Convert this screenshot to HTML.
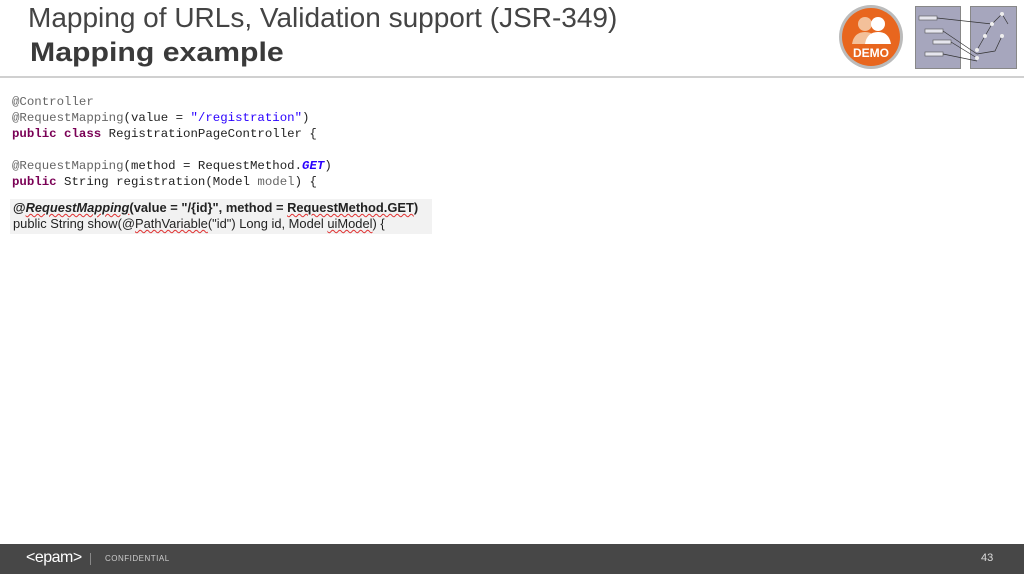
<!DOCTYPE html>
<html><head><style>
body{margin:0;width:1024px;height:574px;position:relative;background:#fff;overflow:hidden;font-family:"Liberation Sans",sans-serif}
.t1{position:absolute;left:28px;top:2px;font-size:28px;color:#444;white-space:nowrap}
.t2{position:absolute;left:30px;top:37px;font-size:27px;font-weight:bold;color:#3a3a3a;white-space:nowrap;transform:scaleX(1.12);transform-origin:left}
.hl{position:absolute;left:0;top:76px;width:1024px;height:2px;background:#d0d0d0}
.code{position:absolute;left:12px;font-family:"Liberation Mono",monospace;font-size:12.4px;color:#222;white-space:pre;line-height:16px}
.k{color:#7a0055;font-weight:bold}.a{color:#666}.s{color:#2a00ff}
.box{position:absolute;left:10px;top:199px;width:422px;height:35px;background:#f2f2f2;font-size:12.9px;color:#222;line-height:16px}
.foot{position:absolute;left:0;top:544px;width:1024px;height:30px;background:#474747;color:#ddd}
u{text-decoration:underline wavy #e03030;text-decoration-thickness:1px}
</style></head><body>
<div class="t1">Mapping of URLs, Validation support (JSR-349)</div>
<div class="t2">Mapping example</div>
<div class="hl"></div>
<svg style="position:absolute;left:838px;top:4px" width="68" height="66"><circle cx="33" cy="33" r="32" fill="#bbb"/><circle cx="33" cy="33" r="29" fill="#e8661e"/><circle cx="27" cy="20" r="7" fill="#f3c09a"/><circle cx="40" cy="20" r="7" fill="#fff"/><path d="M14 40q2-12 13-12q11 0 13 12z" fill="#f3c09a"/><path d="M27 40q2-12 13-12q11 0 13 12z" fill="#fff"/><text x="33" y="53" font-size="12" font-weight="bold" fill="#fff" text-anchor="middle" font-family="Liberation Sans">DEMO</text></svg>
<div style="position:absolute;left:915px;top:6px;width:44px;height:61px;background:#a6a6bd;border:1px solid #888"></div>
<div style="position:absolute;left:970px;top:6px;width:45px;height:61px;background:#a6a6bd;border:1px solid #888"></div>
<svg style="position:absolute;left:915px;top:6px" width="102" height="62"><g fill="#e6e6ee" stroke="#555" stroke-width=".6"><rect x="4" y="10" width="18" height="4"/><rect x="10" y="23" width="18" height="4"/><rect x="18" y="34" width="18" height="4"/><rect x="10" y="46" width="18" height="4"/></g><g stroke="#333" stroke-width=".7" fill="none"><path d="M22 12L77 18M28 25L62 48M36 36L62 52M28 48L62 55M77 18L87 8L93 18M77 18L70 30L62 44M87 30L80 45L62 48"/></g><g fill="#eee"><circle cx="87" cy="8" r="2"/><circle cx="77" cy="18" r="2"/><circle cx="70" cy="30" r="2"/><circle cx="87" cy="30" r="2"/><circle cx="62" cy="44" r="2"/><circle cx="62" cy="52" r="2"/></g></svg>
<div class="code" style="top:94px"><span class="a">@Controller</span>
<span class="a">@RequestMapping</span>(value = <span class="s">"/registration"</span>)
<span class="k">public class</span> RegistrationPageController {

<span class="a">@RequestMapping</span>(method = RequestMethod.<i class="s" style="font-weight:bold">GET</i>)
<span class="k">public</span> String registration(Model <span class="a">model</span>) {</div>
<div class="box"><div style="padding:1px 0 0 3px"><b>@<i><u>RequestMapping</u></i>(value = "/{id}", method = <u>RequestMethod.GET</u>)</b><br>public String show(@<u>PathVariable</u>("id") Long id, Model <u>uiModel</u>) {</div></div>
<div class="foot">
<div style="position:absolute;left:26px;top:5px;font-size:16px;color:#fff;letter-spacing:-.5px">&lt;epam&gt;</div>
<div style="position:absolute;left:90px;top:9px;width:1px;height:12px;background:#888"></div>
<div style="position:absolute;left:105px;top:10px;font-size:8px;letter-spacing:.5px;color:#ccc">CONFIDENTIAL</div>
<div style="position:absolute;left:981px;top:8px;font-size:11px;color:#ddd">43</div>
</div>
</body></html>
